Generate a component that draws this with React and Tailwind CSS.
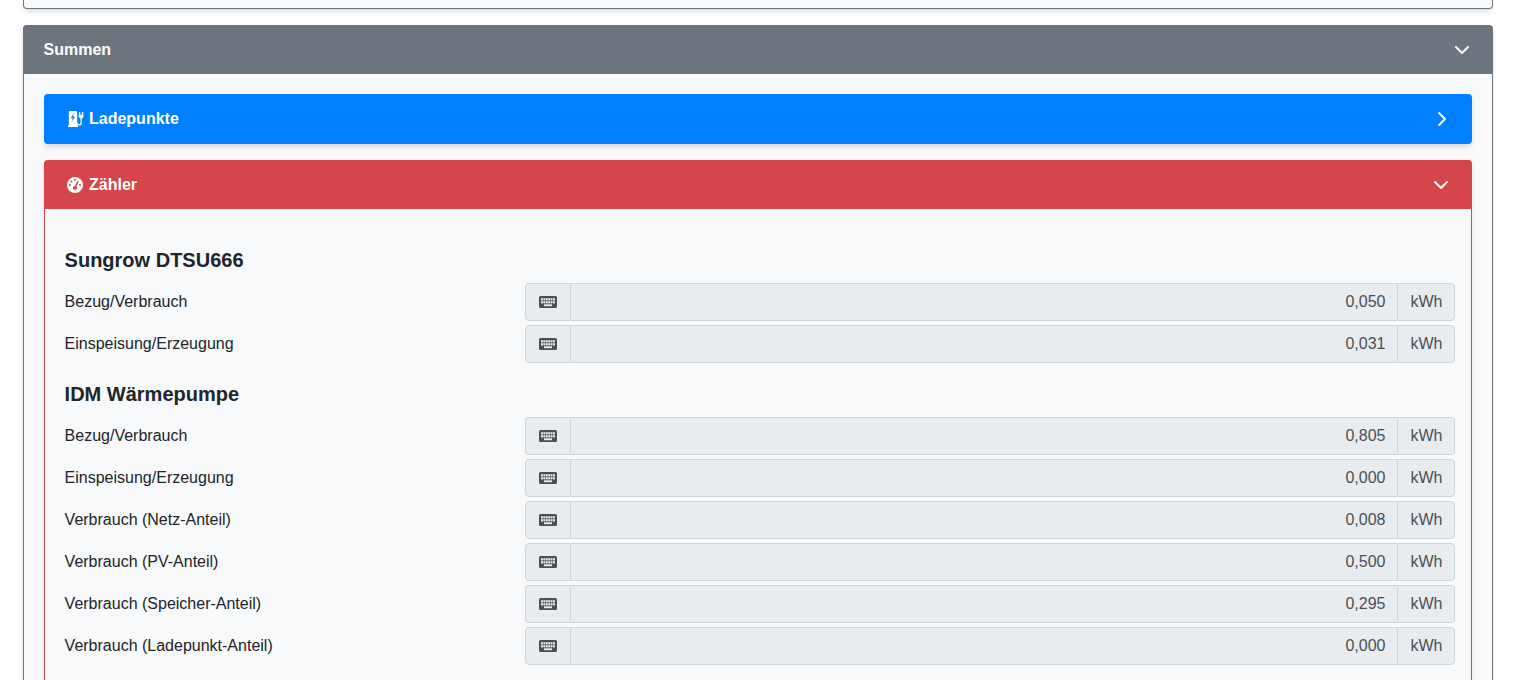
import React from "react";
import { FaGaugeHigh } from "react-icons/fa6";
import { ChevronDown, ChevronRight } from "lucide-react";

const KEY_X = [2, 4.4, 6.8, 9.2, 11.6, 14];

function KeyboardIcon() {
  return (
    <svg width="18" height="12" viewBox="0 0 18 12" aria-hidden="true">
      <rect width="18" height="12" rx="1.5" fill="#495057" />
      {[2.2, 5.2].map((y) => KEY_X.map((x) => (
        <rect key={`${x}-${y}`} x={x} y={y} width="1.9" height="2.2" fill="#e9ecef" />
      )))}
      <rect x="5" y="8.3" width="8" height="1.9" fill="#e9ecef" />
    </svg>
  );
}

function ChargingIcon() {
  return (
    <svg width="17" height="16" viewBox="0 0 17 16" aria-hidden="true">
      <path d="M2 0h6a1.2 1.2 0 0 1 1.2 1.2V14.5H10V16H0v-1.5h.8V1.2A1.2 1.2 0 0 1 2 0z" fill="#fff" />
      <path d="M5.8 2 2.8 7h2L3.6 11l3.4-5.2H5z" fill="#0080ff" />
      <path d="M11.6 1v2.4M14.6 1v2.4" stroke="#fff" strokeWidth="1.3" fill="none" />
      <path d="M10.8 3.4h4.6v1.8a2.3 2.3 0 0 1-4.6 0z" fill="#fff" />
      <path d="M13.1 7v5.2a1.8 1.8 0 0 1-3.6 0" stroke="#fff" strokeWidth="1.3" fill="none" />
    </svg>
  );
}

function Row({ label, value }) {
  return (
    <div className="flex h-[38px] items-center">
      <div className="w-[460.4px] shrink-0 pb-px text-base leading-6 text-[#212529]">{label}</div>
      <div className="flex h-[38px] min-w-0 flex-1 text-base leading-6 text-[#495057]">
        <div className="flex w-[46px] shrink-0 items-center justify-center rounded-l border border-[#ced4da] bg-[#e9ecef]">
          <KeyboardIcon />
        </div>
        <div className="flex min-w-0 flex-1 items-center justify-end border-y border-[#ced4da] bg-[#e9ecef] pr-[11.5px] pl-3">{value}</div>
        <div className="flex w-[58px] shrink-0 items-center justify-center rounded-r border border-[#ced4da] bg-[#e9ecef] pl-px">kWh</div>
      </div>
    </div>
  );
}

function Group({ title, rows }) {
  return (
    <section className="flex flex-col">
      <h5 className="mb-[11px] text-xl leading-6 font-bold text-[#212529]">{title}</h5>
      <div className="flex flex-col gap-1">
        {rows.map(([l, v]) => <Row key={l} label={l} value={v} />)}
      </div>
    </section>
  );
}

export default function App() {
  return (
    <div className="h-[680px] overflow-hidden bg-white pr-[35px] pl-[23px] font-['Liberation_Sans',Arial,sans-serif]">
      <div className="h-[9px] rounded-b border-x border-b border-[#6c757d] bg-[#f8f9fa] shadow-md" />
      <div className="mt-4 rounded border border-[#6c757d] bg-[#f8f9fa] shadow-md">
        <div className="-m-px flex h-[49px] items-center justify-between rounded-t bg-[#6c757d] pr-[19px] pl-[20.5px] text-white">
          <span className="text-base font-bold">Summen</span>
          <ChevronDown size={24} strokeWidth={2} />
        </div>
        <div className="flex flex-col gap-4 px-5 pt-[21px]">
          <div className="flex h-[50px] items-center justify-between rounded bg-[#0080ff] pr-[18px] pl-6 text-white shadow-md">
            <span className="flex items-center gap-1 text-base font-bold">
              <ChargingIcon />
              Ladepunkte
            </span>
            <ChevronRight size={24} strokeWidth={2} />
          </div>
          <div className="rounded border border-[#d5454c] bg-[#f8f9fa] shadow-md">
            <div className="-m-px flex h-[49px] items-center justify-between rounded-t bg-[#d5454c] pr-[19px] pl-[23px] text-white">
              <span className="flex items-center gap-[6px] text-base font-bold">
                <FaGaugeHigh className="h-4 w-4" />
                Zähler
              </span>
              <ChevronDown size={24} strokeWidth={2} />
            </div>
            <div className="flex flex-col gap-[19px] pt-10 pr-4 pb-8 pl-[19.6px]">
              <Group title="Sungrow DTSU666" rows={[["Bezug/Verbrauch", "0,050"], ["Einspeisung/Erzeugung", "0,031"]]} />
              <Group title="IDM Wärmepumpe" rows={[
                ["Bezug/Verbrauch", "0,805"],
                ["Einspeisung/Erzeugung", "0,000"],
                ["Verbrauch (Netz-Anteil)", "0,008"],
                ["Verbrauch (PV-Anteil)", "0,500"],
                ["Verbrauch (Speicher-Anteil)", "0,295"],
                ["Verbrauch (Ladepunkt-Anteil)", "0,000"],
              ]} />
            </div>
          </div>
        </div>
      </div>
    </div>
  );
}
